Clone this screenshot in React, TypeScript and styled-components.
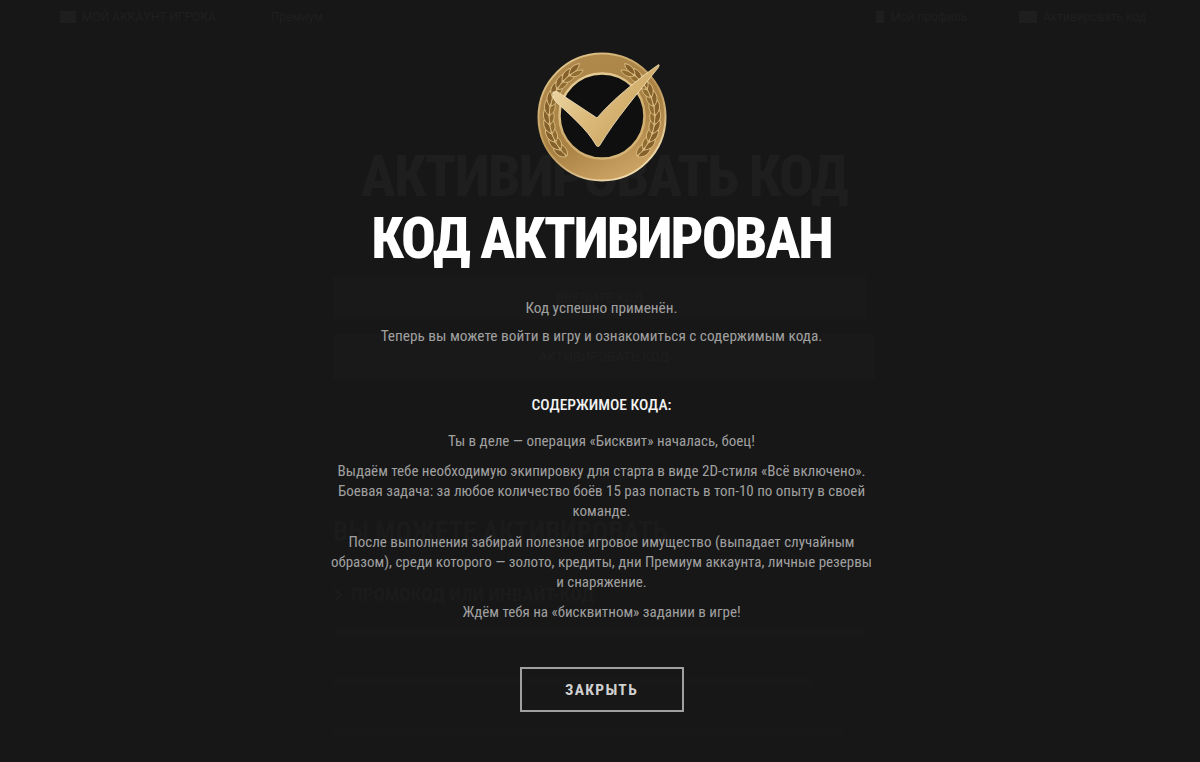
import * as React from 'react'
import styled, { createGlobalStyle } from 'styled-components'

const GlobalStyle = createGlobalStyle`
  html, body {
    margin: 0;
    padding: 0;
    background: #171717;
    font-family: "Roboto", "Liberation Sans", sans-serif;
  }
`

const Page = styled.div`
  position: relative;
  width: 1200px;
  height: 762px;
  overflow: hidden;
  background: #171717;
`

const Backdrop = styled.div`
  display: flex;
  flex-direction: column;
  height: 100%;
  color: #1e1e1e;
`

const TopBar = styled.div`
  display: flex;
  align-items: center;
  justify-content: space-between;
  height: 34px;
  padding: 0 54px 0 60px;
  font-size: 12px;
  color: #1f1f1f;
`

const TopBarGroup = styled.div<{ $gap: number }>`
  display: flex;
  align-items: center;
  gap: ${p => p.$gap}px;
`

const TopBarItem = styled.span`
  display: flex;
  align-items: center;
  gap: 6px;
`

const TopBarMark = styled.i<{ $w: number }>`
  display: block;
  width: ${p => p.$w}px;
  height: 12px;
  background: #1e1e1e;
`

const GhostColumn = styled.div`
  display: flex;
  flex-direction: column;
  width: 542px;
  margin-left: 333px;
`

const GhostTitle = styled.div`
  margin-top: 112px;
  text-align: center;
  font-size: 58px;
  line-height: 60px;
  font-weight: 800;
  font-stretch: 75%;
  letter-spacing: -1.85px;
  white-space: nowrap;
`

const GhostField = styled.div<{ $mt: number; $h: number; $w: number }>`
  width: ${p => p.$w}px;
  height: ${p => p.$h}px;
  margin-top: ${p => p.$mt}px;
  display: flex;
  align-items: center;
  justify-content: center;
  background: #191919;
  font-size: 13px;
`

const GhostHeading = styled.div<{ $mt: number; $size: number }>`
  display: flex;
  align-items: center;
  gap: 8px;
  margin-top: ${p => p.$mt}px;
  font-size: ${p => p.$size}px;
  font-weight: 700;
  font-stretch: 75%;
  color: #1b1b1b;
  white-space: nowrap;
`

const GhostChevron = styled.svg`
  display: block;
  flex: none;
`

const GhostLine = styled.div<{ $mt: number; $w: number }>`
  width: ${p => p.$w}px;
  height: 8px;
  margin-top: ${p => p.$mt}px;
  background: #181818;
`

const Overlay = styled.div`
  position: absolute;
  inset: 0;
  display: flex;
  flex-direction: column;
  align-items: center;
  padding-left: 3px;
`

const Medal = styled.svg`
  display: block;
  flex: none;
  margin-top: 52px;
`

const Title = styled.h1`
  margin: 21px 0 0;
  font-size: 58px;
  line-height: 70px;
  font-weight: 800;
  font-stretch: 75%;
  letter-spacing: -2px;
  color: #fff;
  white-space: nowrap;
`

const Body = styled.div`
  width: 545px;
  margin-top: 25px;
  text-align: center;
  font-size: 15px;
  line-height: 20px;
  font-stretch: 75%;
  color: #a0a0a0;
`

const Intro = styled.p<{ $mt?: number }>`
  margin: ${p => p.$mt ?? 0}px 0 0;
  font-size: 15.3px;
`

const Para = styled.p<{ $mt?: number }>`
  margin: ${p => p.$mt ?? 0}px 0 0;
`

const SubHeading = styled.p`
  margin: 49px 0 0;
  font-size: 15.5px;
  font-weight: 500;
  color: #f2f2f2;
`

const CloseButton = styled.button`
  display: block;
  flex: none;
  width: 164px;
  height: 45px;
  margin-top: 45px;
  background: transparent;
  border: 2px solid #a0a0a0;
  color: #d0d0d0;
  font-family: inherit;
  font-size: 15.5px;
  font-weight: 700;
  font-stretch: 75%;
  letter-spacing: 1.3px;
`

const leafAngles = [-48, -38, -28, -18, -8, 2, 12, 22, 32, 42, 52]

function Laurel({ flip }: { flip?: boolean }) {
  return (
    <g transform={flip ? 'translate(130 0) scale(-1 1)' : undefined}>
      {leafAngles.map(a => (
        <g key={a} transform={`rotate(${a} 65 65)`}>
          <path d="M11.5 65 C6.5 61 6 55 9 50 C13 54 13.5 60 11.5 65Z" fill="#85602a" stroke="#ecd196" strokeWidth="0.7" />
          <path d="M13 65 C18 62 19 56 16.5 51 C13 54.5 11.5 60 13 65Z" fill="#916c31" stroke="#f0d8a0" strokeWidth="0.6" />
        </g>
      ))}
    </g>
  )
}

function MedalIcon() {
  return (
    <Medal width="130" height="130" viewBox="0 0 130 130">
      <defs>
        <linearGradient id="ring" x1="0.2" y1="0" x2="0.7" y2="1">
          <stop offset="0" stopColor="#b08a4e" />
          <stop offset="0.6" stopColor="#a98143" />
          <stop offset="1" stopColor="#d0a767" />
        </linearGradient>
        <linearGradient id="edge" x1="0.2" y1="0" x2="0.8" y2="1">
          <stop offset="0" stopColor="#e2c78e" />
          <stop offset="0.5" stopColor="#bd9656" />
          <stop offset="1" stopColor="#f7e7bd" />
        </linearGradient>
        <linearGradient id="rim" x1="0.3" y1="0" x2="0.7" y2="1">
          <stop offset="0" stopColor="#e6cd96" />
          <stop offset="0.6" stopColor="#cfac6e" />
          <stop offset="1" stopColor="#d6b678" />
        </linearGradient>
        <linearGradient id="check" x1="0" y1="0" x2="1" y2="0.6">
          <stop offset="0" stopColor="#efdcb0" />
          <stop offset="0.5" stopColor="#dcbb7c" />
          <stop offset="1" stopColor="#c9a25c" />
        </linearGradient>
      </defs>
      <circle cx="65" cy="65" r="63.5" fill="url(#ring)" stroke="url(#edge)" strokeWidth="2" />
      <Laurel />
      <Laurel flip />
      <circle cx="65" cy="64" r="42.5" fill="#0f0f0f" stroke="url(#rim)" strokeWidth="2.5" />
      <path
        d="M16 40 L20 39.5 L60 66 C75 48 100 28 121 13 C123 12 122 14 121 16 C100 42 78 68 63 93 C62 95 60 95 59 93 C50 77 32 62 18 49 C16 46 15 42 16 40Z"
        fill="url(#check)"
        stroke="#f6e6bf"
        strokeWidth="0.8"
      />
    </Medal>
  )
}

export default function App() {
  return (
    <Page>
      <GlobalStyle />
      <Backdrop aria-hidden>
        <TopBar>
          <TopBarGroup $gap={55}>
            <TopBarItem><TopBarMark $w={16} />МОЙ АККАУНТ ИГРОКА</TopBarItem>
            <span>Премиум</span>
          </TopBarGroup>
          <TopBarGroup $gap={52}>
            <TopBarItem><TopBarMark $w={8} />Мой профиль</TopBarItem>
            <TopBarItem><TopBarMark $w={18} />Активировать код</TopBarItem>
          </TopBarGroup>
        </TopBar>
        <GhostColumn>
          <GhostTitle>АКТИВИРОВАТЬ КОД</GhostTitle>
          <GhostField $mt={70} $h={43} $w={533}>ВВЕДИТЕ КОД</GhostField>
          <GhostField $mt={15} $h={45} $w={542}>АКТИВИРОВАТЬ КОД</GhostField>
          <GhostHeading $mt={137} $size={27}>ВЫ МОЖЕТЕ АКТИВИРОВАТЬ</GhostHeading>
          <GhostHeading $mt={35} $size={19}>
            <GhostChevron width="10" height="14" viewBox="0 0 10 14">
              <path d="M2 2 L8 7 L2 12" fill="none" stroke="#1d1d1d" strokeWidth="2" />
            </GhostChevron>
            ПРОМОКОД ИЛИ ИНВАЙТ-КОД
          </GhostHeading>
          <GhostLine $mt={22} $w={533} />
          <GhostLine $mt={42} $w={480} />
          <GhostLine $mt={42} $w={510} />
        </GhostColumn>
      </Backdrop>
      <Overlay>
        <MedalIcon />
        <Title>КОД АКТИВИРОВАН</Title>
        <Body>
          <Intro>Код успешно применён.</Intro>
          <Intro $mt={8}>Теперь вы можете войти в игру и ознакомиться с содержимым кода.</Intro>
          <SubHeading>СОДЕРЖИМОЕ КОДА:</SubHeading>
          <Para $mt={16}>Ты в деле — операция «Бисквит» началась, боец!</Para>
          <Para $mt={10}>
            Выдаём тебе необходимую экипировку для старта в виде 2D-стиля «Всё включено». Боевая задача: за любое количество боёв 15 раз попасть в топ-10 по опыту в своей команде.
          </Para>
          <Para $mt={11}>
            После выполнения забирай полезное игровое имущество (выпадает случайным образом), среди которого — золото, кредиты, дни Премиум аккаунта, личные резервы и снаряжение.
          </Para>
          <Para $mt={10}>Ждём тебя на «бисквитном» задании в игре!</Para>
        </Body>
        <CloseButton>ЗАКРЫТЬ</CloseButton>
      </Overlay>
    </Page>
  )
}
